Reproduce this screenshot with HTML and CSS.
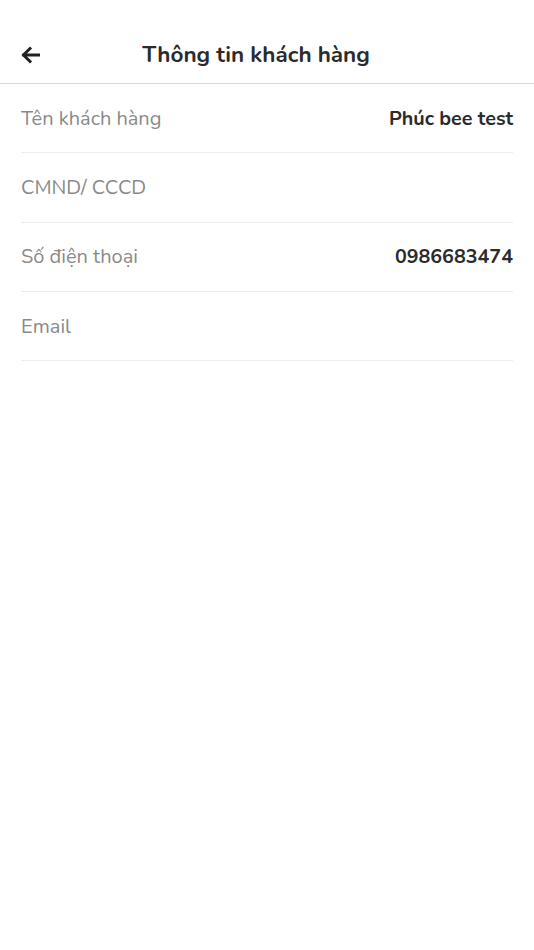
FILE: index.html
```html
<!DOCTYPE html>
<html lang="vi">
<head>
<meta charset="utf-8">
<title>Thông tin khách hàng</title>
<link rel="stylesheet" href="styles.css">
</head>
<body>
<header class="topbar">
  <button class="back" aria-label="Quay lại">
    <svg width="20" height="18" viewBox="0 0 20 18" fill="none" stroke="#222" stroke-width="3" stroke-linecap="square" stroke-linejoin="miter">
      <path d="M17.5 9H3"/>
      <path d="M9 2.5L2.5 9L9 15.5"/>
    </svg>
  </button>
  <h1 class="title">Thông tin khách hàng</h1>
</header>
<main class="list">
  <div class="row"><span class="label">Tên khách hàng</span><span class="value">Phúc bee test</span></div>
  <div class="row"><span class="label">CMND/ CCCD</span><span class="value"></span></div>
  <div class="row"><span class="label">Số điện thoại</span><span class="value">0986683474</span></div>
  <div class="row"><span class="label">Email</span><span class="value"></span></div>
</main>
</body>
</html>
```
FILE: styles.css
```css
html, body {
  margin: 0;
  padding: 0;
  background: #fff;
  font-family: "Nunito", "Lato", "Noto Sans", sans-serif;
}
.topbar {
  height: 84px;
  box-sizing: border-box;
  padding-top: 29px;
  border-bottom: 1px solid #d9d9d9;
  display: grid;
  grid-template-columns: 60px 1fr 82px;
  align-items: start;
}
.back {
  border: 0;
  background: none;
  padding: 0 0 0 21px;
  height: 52px;
  display: flex;
  align-items: center;
  cursor: pointer;
}
.back svg { display: block; }
.title {
  margin: 0;
  text-align: center;
  font-size: 22.5px;
  font-weight: 700;
  color: #2b2b2b;
  line-height: 52px;
  white-space: nowrap;
}
.list {
  padding: 0 21px;
}
.row {
  height: 69.3px;
  box-sizing: border-box;
  border-bottom: 1px solid #ececec;
  display: flex;
  justify-content: space-between;
  align-items: center;
}
.label {
  font-size: 20px;
  color: #8a8a8a;
}
.value {
  font-size: 19.7px;
  font-weight: 700;
  color: #2b2b2b;
}
```
